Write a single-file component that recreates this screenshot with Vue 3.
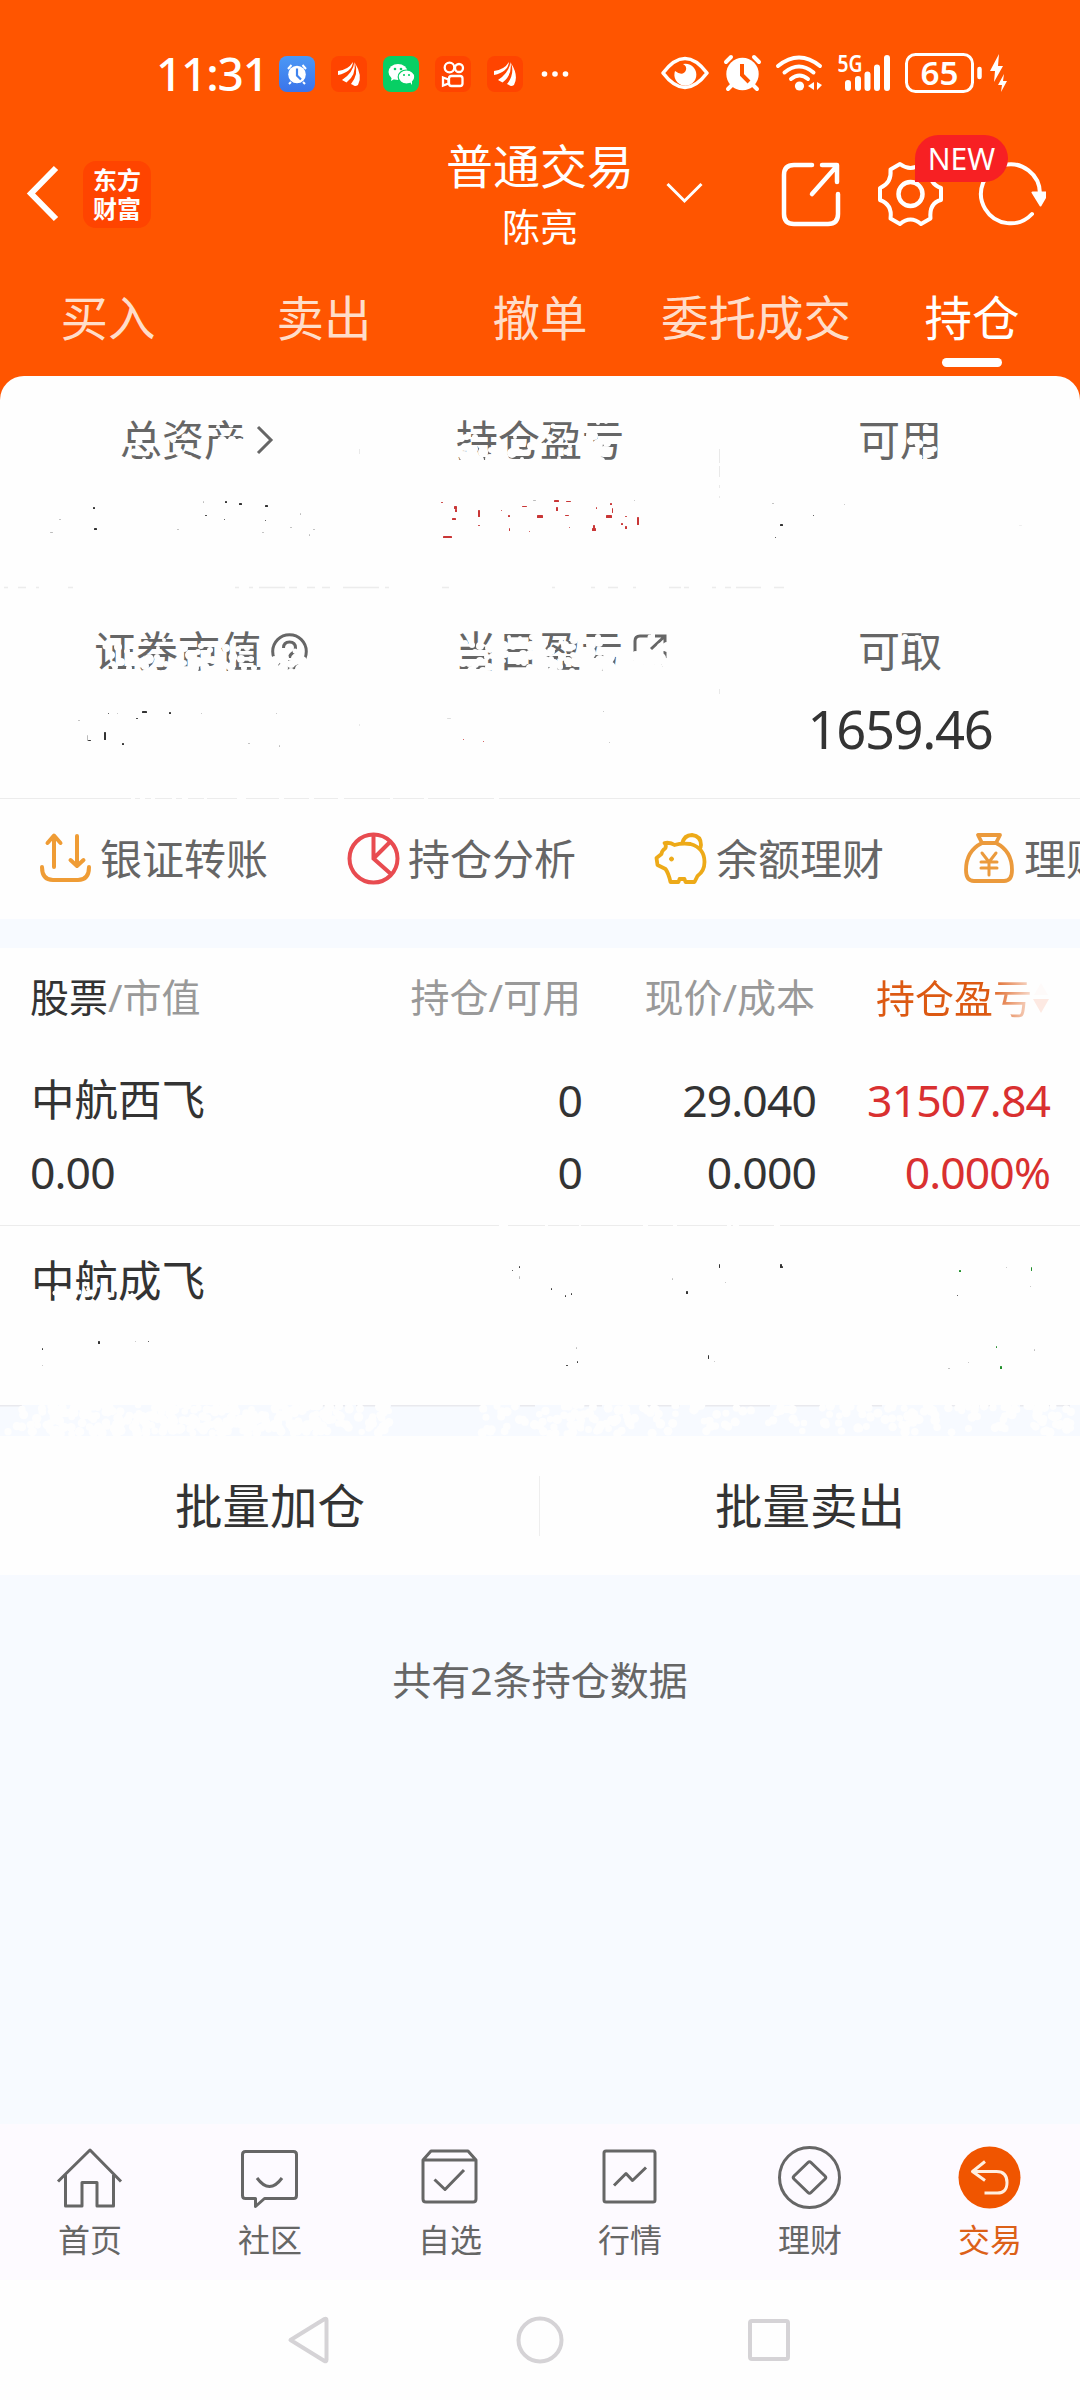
<script setup>
const tabs = ['买入', '卖出', '撤单', '委托成交', '持仓']
const holdings = [
  { name: '中航西飞', value: '0.00', amount: '0', usable: '0', price: '29.040', cost: '0.000', profit: '31507.84', rate: '0.000%' },
  { name: '中航成飞' }
]

// white eraser marks over the hidden figures: [x, y, r]
const blots = [
  [139, 442, 3.5], [134, 452, 3.5], [150, 447, 3.5], [144, 459, 2], [173, 440, 3], [185, 437, 3.5], [179, 452, 4], [196, 451, 3], [190, 457, 2],
  [214, 433, 3.5], [222, 441, 5], [232, 440, 4], [243, 434, 3], [231, 425, 2.5], [240, 441, 3], [218, 427, 2],
  [461, 438, 4], [466, 437, 3], [465, 447, 4], [464, 456, 5], [457, 451, 4], [475, 437, 3], [474, 449, 4], [483, 452, 5], [490, 459, 5], [480, 460, 4], [484, 440, 2], [472, 457, 4], [491, 450, 3],
  [504, 444, 3], [502, 451, 4], [512, 453, 5], [521, 444, 3], [506, 457, 2.5], [531, 446, 4], [515, 437, 2], [520, 452, 3], [522, 459, 2],
  [546, 430, 3.5], [553, 426, 2.5], [549, 437, 3], [561, 440, 2.5], [566, 452, 3], [559, 458, 2], [544, 445, 2.5], [570, 446, 2], [552, 454, 2],
  [594, 436, 4], [590, 445, 5], [598, 444, 5], [607, 443, 4], [596, 452, 6], [604, 450, 4], [593, 459, 6], [601, 461, 4], [598, 423, 2], [606, 422, 2], [590, 435, 4],
  [911, 441, 4], [919, 444, 4.5], [929, 441, 4], [914, 453, 4], [928, 453, 5], [934, 449, 3], [920, 457, 2.5], [926, 427, 3],
  [106, 646, 3.5], [111, 655, 4], [118, 647, 4], [121, 662, 4], [130, 659, 4], [127, 651, 3], [115, 667, 3], [129, 668, 3], [113, 664, 3],
  [146, 643, 3], [149, 659, 5], [157, 657, 3], [145, 666, 4], [166, 664, 3], [176, 665, 4], [164, 640, 2], [153, 668, 3], [158, 648, 2],
  [184, 648, 4], [190, 655, 5], [198, 662, 5], [205, 667, 4.5], [213, 660, 4], [210, 650, 3], [194, 668, 5], [184, 663, 3], [201, 646, 3], [198, 652, 3],
  [226, 648, 4], [233, 657, 4.5], [241, 659, 4], [231, 667, 4.5], [251, 659, 3], [247, 648, 3], [225, 665, 4], [254, 668, 3], [238, 649, 3], [244, 668, 3],
  [275, 661, 5], [283, 668, 5], [291, 664, 4], [302, 661, 5], [300, 669, 5], [286, 658, 3], [295, 651, 2.5], [275, 669, 5], [291, 671, 3],
  [465, 643, 3], [472, 645, 3], [466, 653, 3], [480, 646, 4], [490, 648, 5], [475, 652, 3], [487, 657, 3], [480, 661, 4], [469, 664, 3], [475, 664, 4], [489, 667, 4], [463, 663, 4], [472, 671, 5], [483, 671, 4], [492, 656, 3],
  [504, 646, 5], [505, 654, 4], [513, 645, 5], [523, 643, 5], [531, 646, 5], [514, 659, 4], [523, 654, 4], [530, 655, 5], [501, 638, 1.5], [509, 637, 2], [518, 662, 3], [524, 663, 3], [532, 637, 3], [504, 661, 2], [530, 668, 4], [520, 638, 2],
  [544, 643, 4], [551, 651, 4], [565, 645, 4], [574, 640, 4], [573, 655, 3], [543, 653, 5], [545, 662, 6], [554, 664, 5], [562, 657, 4], [568, 661, 4], [575, 662, 5], [553, 671, 5], [543, 670, 6], [561, 642, 2.5], [572, 671, 3], [551, 659, 3], [560, 667, 3], [573, 647, 3],
  [591, 645, 5], [599, 643, 4], [598, 637, 3], [608, 641, 3], [590, 653, 6], [600, 660, 5], [609, 657, 6], [596, 667, 7], [609, 668, 7], [616, 653, 4], [604, 651, 3],
  [636, 656, 5], [637, 666, 7], [649, 668, 7], [661, 658, 5], [667, 647, 5], [658, 668, 5], [666, 663, 5], [650, 637, 2.5], [661, 647, 4],
  [905, 637, 3], [917, 638, 3],
  [55, 1293, 2.5], [57, 1287, 2], [79, 1292, 2.5], [85, 1284, 2.5], [91, 1293, 3.5], [97, 1285, 3], [109, 1295, 3], [104, 1288, 2], [88, 1289, 2], [132, 1294, 1.5]
]

// what the eraser left of the figures: [x, y, w, h, color]
const K = '#333', G = '#bbb', R = '#c93636', N = '#1f8f2a'
const specks = [
  [93, 507, 2, 2, K], [94, 528, 3, 2, K], [225, 501, 2, 2, K], [239, 503, 3, 2, K], [265, 505, 3, 2, K], [50, 532, 3, 1, G], [59, 519, 2, 1, G],
  [205, 515, 2, 1, K], [177, 529, 2, 1, G], [203, 501, 1, 2, G], [224, 519, 1, 1, K], [265, 520, 1, 1, K], [300, 513, 1, 2, G], [313, 529, 2, 1, G], [262, 532, 2, 1, G], [290, 527, 2, 1, G], [309, 534, 1, 2, G],
  [441, 502, 2, 1, R], [454, 506, 3, 3, R], [455, 509, 2, 3, R], [452, 518, 4, 2, R], [443, 536, 9, 2, R], [478, 510, 2, 7, R], [478, 525, 2, 1, R], [501, 510, 1, 1, R],
  [508, 515, 2, 2, R], [509, 528, 1, 3, R], [522, 506, 5, 1, R], [533, 500, 3, 1, G], [537, 515, 6, 3, R], [529, 531, 1, 1, R], [554, 500, 5, 2, R], [556, 507, 2, 4, R],
  [566, 501, 5, 1, R], [565, 515, 4, 1, R], [569, 527, 1, 1, R], [596, 507, 1, 2, R], [610, 503, 2, 2, R], [612, 508, 1, 5, R], [606, 515, 6, 3, R], [593, 525, 2, 3, R], [592, 528, 4, 3, R],
  [621, 523, 2, 2, R], [625, 516, 2, 1, R], [625, 526, 2, 3, R], [637, 517, 2, 8, R], [634, 500, 1, 1, G],
  [780, 524, 3, 2, K], [813, 515, 1, 1, K], [775, 537, 1, 1, K], [772, 503, 2, 1, G], [844, 504, 1, 1, G], [1019, 525, 3, 1, '#eee'],
  [142, 711, 5, 2, K], [169, 712, 2, 2, K], [136, 718, 2, 1, K], [104, 732, 2, 8, K], [87, 735, 1, 6, G], [88, 740, 3, 1, K], [122, 743, 2, 2, K], [108, 713, 1, 1, K], [78, 720, 2, 1, G],
  [117, 713, 1, 1, G], [248, 743, 2, 1, G], [201, 713, 1, 1, G], [276, 713, 1, 1, G], [279, 745, 1, 2, G], [447, 718, 4, 1, '#ddd'], [463, 739, 1, 1, R], [483, 741, 1, 1, R], [603, 711, 1, 1, G], [609, 742, 1, 1, G],
  [519, 1266, 1, 2, K], [512, 1270, 1, 1, K], [519, 1276, 1, 3, G], [551, 1288, 1, 2, K], [565, 1295, 1, 2, K], [571, 1293, 1, 2, K],
  [719, 1264, 1, 4, K], [780, 1264, 2, 4, K], [782, 1266, 1, 2, K], [686, 1291, 2, 3, K], [672, 1278, 1, 2, G], [725, 1282, 1, 1, G],
  [1031, 1267, 1, 4, N], [959, 1270, 2, 2, N], [957, 1295, 1, 1, K], [1006, 1267, 1, 1, G], [1030, 1286, 1, 1, G],
  [98, 1341, 2, 3, K], [42, 1348, 1, 2, K], [42, 1365, 1, 1, G], [148, 1341, 1, 1, K], [135, 1341, 1, 1, G],
  [576, 1347, 1, 2, G], [577, 1361, 1, 2, K], [566, 1365, 2, 1, K], [708, 1355, 1, 4, K], [714, 1361, 1, 1, G],
  [996, 1346, 1, 2, N], [1000, 1366, 2, 3, N], [968, 1362, 1, 1, G], [1034, 1349, 1, 2, G], [948, 1368, 2, 1, G]
]

// scattered marks on the lower separator band: [from, to, count]
const bandBlots = []
let seed = 7
const rnd = () => (seed = (seed * 16807) % 2147483647) / 2147483647
for (const [from, to, count] of [[8, 50, 12], [50, 330, 290], [325, 390, 40], [480, 650, 75], [650, 870, 62], [870, 1075, 90]]) {
  for (let i = 0; i < count; i++) {
    bandBlots.push([from + rnd() * (to - from), rnd() ** (from > 480 ? 1.4 : 1) * 29, 3.2 + rnd() * 1.6])
  }
}
</script>

<template>
<div class="screen">
  <header class="top">
    <div class="status">
      <span class="time">11:31</span>
      <div class="apps">
        <svg class="app blue" viewBox="0 0 36 36">
          <circle cx="18" cy="18.5" r="8.8" fill="#fff" />
          <path d="M9 13l3.5-4M27 13l-3.5-4M12 26l-2 2M24 26l2 2" stroke="#fff" stroke-width="2" />
          <path d="M18 12.5v7l4 4" stroke="#3f83ee" stroke-width="2.2" fill="none" />
        </svg>
        <svg class="app red" viewBox="0 0 36 36"><path d="M7 15q10-1 15-9q-1 10-15 13zM11 24q11-7 12.500-18q2 13-8 20.500zM20 28q8-10 4-21q8 13 3 22q-3 2-5 0z" fill="#fff" /></svg>
        <svg class="app green" viewBox="0 0 36 36">
          <path d="M9 20l-1 5 5-3z" fill="#fff" /><ellipse cx="15" cy="16" rx="9.5" ry="8" fill="#fff" />
          <ellipse cx="23.5" cy="21" rx="8.3" ry="7" fill="#fff" stroke="#07cf64" stroke-width="1.2" /><path d="M27 26l2 3v-4z" fill="#fff" />
          <g fill="#07cf64"><circle cx="12" cy="13" r="1.3" /><circle cx="18" cy="13" r="1.3" /><circle cx="21" cy="19" r="1.1" /><circle cx="26" cy="19" r="1.1" /></g>
        </svg>
        <svg class="app red" viewBox="0 0 36 36" fill="none" stroke="#fff" stroke-width="2.3">
          <circle cx="14.5" cy="11.5" r="4.8" /><circle cx="24" cy="12" r="4" /><rect x="14" y="20" width="13.5" height="10" rx="2.5" /><path d="M8 21.5l5.5 2v4l-5.5 2z" />
        </svg>
        <svg class="app red" viewBox="0 0 36 36"><path d="M7 15q10-1 15-9q-1 10-15 13zM11 24q11-7 12.500-18q2 13-8 20.500zM20 28q8-10 4-21q8 13 3 22q-3 2-5 0z" fill="#fff" /></svg>
        <svg class="more" width="28" height="8" viewBox="0 0 28 8" fill="#fff"><circle cx="3.5" cy="4" r="2.8" /><circle cx="14" cy="4" r="2.8" /><circle cx="24.5" cy="4" r="2.8" /></svg>
      </div>
      <svg class="sys" width="350" height="64" viewBox="657 42 350 64" fill="none" stroke="#fff">
        <path d="M662 73q22-29 44 0q-22 29-44 0z" stroke-width="3.6" stroke-linejoin="round" />
        <path d="M682 64a11 11 0 1 1-8 7q8 6 11-1q1-4-3-6z" fill="#fff" stroke="none" />
        <circle cx="741.5" cy="74" r="16.2" fill="#fff" stroke="none" />
        <path d="M725 62l5-5M758 62l-5-5M731 85l-4 4M752 85l4 4" stroke-width="4" stroke-linecap="round" />
        <path d="M741 64v11l7 7" stroke="#f50" stroke-width="4" />
        <path d="M777 66q21-17 42 0M783.500 72.500q14.500-12 29 0M790 79q8.500-7 17 0" stroke-width="4" stroke-linecap="round" />
        <circle cx="798.5" cy="86" r="4.6" fill="#fff" stroke="none" />
        <path d="M813 82v8l-6-4zM816 82l5 3-5 5z" fill="#fff" stroke="none" />
        <path d="M847 83v5M857 79v9M866.500 74.500v13.500M876 67.500v20.500M886 58v30" stroke-width="6" stroke-linecap="round" />
        <rect x="905.500" y="54.500" width="66" height="37" rx="9" stroke-width="3" />
        <path d="M978.500 69v8" stroke-width="4.500" stroke-linecap="round" />
        <path d="M998 54l-9 17h5l-1 11 9-16h-5zM1003 74l-6 11h4l-1 7 6-11h-4z" fill="#fff" stroke="none" />
        <text class="five-g" x="836.500" y="72" textLength="25" lengthAdjust="spacingAndGlyphs">5G</text>
        <text class="power" x="919.500" y="85" textLength="38" lengthAdjust="spacingAndGlyphs">65</text>
      </svg>
    </div>

    <div class="bar">
      <div class="bar-left">
        <svg width="36" height="60" viewBox="25 165 36 60" fill="none" stroke="#fff" stroke-width="6"><path d="M56 169L31 194.500l25 25.500" /></svg>
        <div class="brand"><span>东方</span><span>财富</span></div>
      </div>
      <div class="title">
        <div class="title-main">普通交易</div>
        <div class="title-sub">陈亮</div>
      </div>
      <svg class="caret" width="40" height="24" viewBox="664 182 40 24" fill="none" stroke="#fff" stroke-width="3"><path d="M666.500 184l17 17 17-17" /></svg>
      <div class="tools">
        <svg width="270" height="72" viewBox="774 158 270 72" fill="none" stroke="#fff" stroke-width="4.500" stroke-linecap="round" stroke-linejoin="round">
          <path d="M810 165h-18q-10 0-10 10v39q0 10 10 10h34q10 0 10-10v-20M820 165h15v17M834 167l-24 27" />
          <path stroke-width="4" d="M898 164q10.500 8 21 0l9.500 5.500q-2 14 10.500 18.500v12q-12 3-10.500 18.500l-9.500 5.500q-10.500-9-21 0l-9.500-5.500q2-14-10.500-18.500v-12q12-5 10.500-18.500z" />
          <circle cx="908.500" cy="194" r="12" />
          <path stroke-width="4" d="M1030 214a29.500 29.500 0 1 1 8-20" />
          <path d="M1030.500 192.500h15.500l-7.500 13z" fill="#fff" stroke-width="2" />
        </svg>
        <span class="new">NEW</span>
      </div>
    </div>

    <nav class="tabs">
      <div v-for="(t, i) in tabs" :key="t" class="tab" :class="{ active: i === 4 }">{{ t }}</div>
    </nav>
  </header>

  <main class="content">
    <section class="assets">
      <div class="cell"><div class="label total">总资产<svg width="18" height="32" viewBox="0 0 18 32" fill="none" stroke="#666" stroke-width="3"><path d="M2 3l13 13L2 29" /></svg></div></div>
      <div class="cell"><div class="label">持仓盈亏</div></div>
      <div class="cell"><div class="label">可用</div></div>
      <div class="cell"><div class="label worth">证券市值<svg width="37" height="37" viewBox="0 0 37 37" fill="none" stroke="#666" stroke-width="3"><circle cx="18.500" cy="18.500" r="16.800" /><path d="M12.500 15q0-6 6-6t6 6q0 3-3 5-3 2-3 5M18.500 27v3" /></svg></div></div>
      <div class="cell"><div class="label today">当日盈亏<svg width="36" height="36" viewBox="0 0 36 36" fill="none" stroke="#666" stroke-width="3"><path d="M19 3H8Q3 3 3 8v20q0 5 5 5h20q5 0 5-5V18M23 3h10v10M33 3L19 16" /></svg></div></div>
      <div class="cell"><div class="label">可取</div><div class="figure">1659.46</div></div>
    </section>

    <section class="menu">
      <div class="menu-item">
        <svg width="54" height="54" viewBox="38 831 54 54" fill="none" stroke="#ef9c35" stroke-width="4" stroke-linecap="round" stroke-linejoin="round">
          <path d="M42 867q0 13 11 13h25q11 0 11-13M54 867v-31M47.500 843l6.500-7.500 6.500 7.500M77 836v29M70.500 860l6.500 6 6.500-6" />
        </svg>
        <span>银证转账</span>
      </div>
      <div class="menu-item">
        <svg width="54" height="54" viewBox="346 831 54 54" fill="none" stroke="#e84b50" stroke-width="4"><circle cx="373.500" cy="858.500" r="24" /><path d="M373.500 834v24.500l18 16M373.500 858.500l17-17" /></svg>
        <span>持仓分析</span>
      </div>
      <div class="menu-item">
        <svg width="54" height="54" viewBox="654 831 54 54" fill="none" stroke="#edaa18" stroke-width="3.800" stroke-linejoin="round">
          <path d="M682 844q2-9 10-9 9 1 9 10 0 3-2 5" />
          <path d="M664.500 843q6-1 10 2 7-2 16-1 14 4 14 18 0 9-7 14l-3 6h-9l-1-3h-5l-1 3h-8q-2-9-5-13l-8-4-1-7 5-4q0-3 4-6 1-3-1-5z" />
          <circle cx="671.500" cy="859" r="2" fill="#edaa18" stroke-width="1" />
        </svg>
        <span>余额理财</span>
      </div>
      <div class="menu-item">
        <svg width="54" height="54" viewBox="962 831 54 54" fill="none" stroke="#eb9a3c" stroke-width="3.800" stroke-linecap="round" stroke-linejoin="round">
          <path d="M978 835h22l-4 8q16 8 16 27 0 11-8 11h-30q-8 0-8-11 0-19 16-27zM982 843h14" /><path d="M982 853l7 9 7-9M989 862v13M981 862h16M981 868h16" stroke-width="3" />
        </svg>
        <span>理财</span>
      </div>
    </section>
    <div class="gap"></div>

    <section class="table">
      <div class="head row">
        <span><b>股票</b>/市值</span><span>持仓/可用</span><span>现价/成本</span>
        <span class="sorted"><i>持仓盈亏</i><svg width="18" height="34" viewBox="0 0 18 34"><path d="M9 3l7 12H2z" fill="#fefaf9" /><path d="M1 19h16L9 33z" fill="#fde9e2" /></svg></span>
      </div>
      <div v-for="h in holdings" :key="h.name" class="holding">
        <div class="row"><span class="name">{{ h.name }}</span><span>{{ h.amount }}</span><span>{{ h.price }}</span><span class="up">{{ h.profit }}</span></div>
        <div class="row second"><span>{{ h.value }}</span><span>{{ h.usable }}</span><span>{{ h.cost }}</span><span class="up">{{ h.rate }}</span></div>
      </div>
    </section>

    <svg class="band" width="1080" height="31" viewBox="0 0 1080 31">
      <path d="M0 .8H22M310 .8h35M356 .8h20M391 .8h90M520 .8h15M580 .8h22M640 .8h40M700 .8h70M790 .8h30M860 .8h22M950 .8h40M1020 .8h50" stroke="#e9e9ee" stroke-width="1.500" />
      <ellipse v-for="(b, i) in bandBlots" :key="i" :cx="b[0]" :cy="b[1]" :rx="b[2]" :ry="b[2]" fill="#fefefe" />
    </svg>

    <section class="batch"><div>批量加仓</div><div>批量卖出</div></section>
    <p class="count">共有2条持仓数据</p>

    <svg class="erased" width="1080" height="1024" viewBox="0 376 1080 1024">
      <path d="M4 587.500h4M18 587.500h8M36 587.500h3M68 587.500h5M235 587.500h4M249 587.500h4M259 587.500h26M289 587.500h8M307 587.500h8M322 587.500h8M343 587.500h36M385 587.500h4M442 587.500h7M552 587.500h3M591 587.500h4M608 587.500h10M633 587.500h3M669 587.500h12M684 587.500h5M712 587.500h4M725 587.500h6M736 587.500h25M774 587.500h10" stroke="#ececec" stroke-width="1.500" />
      <path d="M359.500 449v5M719.500 449v14M719.500 466v11M719.500 485v3M719.500 496v2M719.500 689v5M359.500 724v2" stroke="#e9e9e9" stroke-width="1" />
      <circle v-for="(b, i) in blots" :key="'b' + i" :cx="b[0]" :cy="b[1]" :r="b[2]" fill="#fefefe" />
      <path d="M131 798.500h4M140 798.500h5M151 798.500h4M172 798.500h4M182 798.500h6M204 798.500h3M237 798.500h9M279 798.500h5M309 798.500h5M338 798.500h6M390 798.500h3M424 798.500h4M494 798.500h5M499 1225.500h9M545 1225.500h3M579 1225.500h2M643 1225.500h5M673 1225.500h4M727 1225.500h4M733 1225.500h6M774 1225.500h6" stroke="#fefefe" stroke-width="4" />
      <rect v-for="(s, i) in specks" :key="'s' + i" :x="s[0]" :y="s[1]" :width="s[2]" :height="s[3]" :fill="s[4]" rx=".6" />
    </svg>
  </main>

  <footer class="dock">
    <div class="dock-item">
      <svg width="70" height="70" viewBox="55 2142 70 70"><path d="M58 2181.500l32-31.500 31 31.500M65.500 2175v31h16.500v-23.500h15v23.500h16.500v-31" /></svg>首页
    </div>
    <div class="dock-item">
      <svg width="70" height="70" viewBox="235 2142 70 70"><path d="M245.500 2151.500h48q3 0 3 3v41q0 3-3 3h-29l-9 8v-8h-10q-3 0-3-3v-41q0-3 3-3zM257 2178q12.500 17 25 0" /></svg>社区
    </div>
    <div class="dock-item">
      <svg width="70" height="70" viewBox="415 2142 70 70"><path d="M423 2160l8-9h37l8 9v39q0 3-3 3h-47q-3 0-3-3zh53M434.500 2179.500l10.500 10 19-19.500" /></svg>自选
    </div>
    <div class="dock-item">
      <svg width="70" height="70" viewBox="595 2142 70 70"><rect x="604" y="2151" width="51" height="51" rx="2" /><path d="M614 2185.500l12-12 6.500 7 13.500-13" /></svg>行情
    </div>
    <div class="dock-item">
      <svg width="70" height="70" viewBox="775 2142 70 70"><circle cx="809.500" cy="2177.500" r="30" /><path d="M808 2162.500q1.500-1.500 3 0l14 13.500q1.500 1.500 0 3l-14 13.500q-1.500 1.500-3 0l-14-13.500q-1.500-1.500 0-3z" /></svg>理财
    </div>
    <div class="dock-item current">
      <svg width="70" height="70" viewBox="955 2142 70 70"><circle cx="989.500" cy="2177.500" r="31" fill="#f05500" stroke="none" /><path d="M985 2161.500l-12.500 10 12.500 9M973 2171.500h23.500q10.500 0 10.500 11t-10.500 10.500h-12" stroke="#ffefe0" /></svg>交易
    </div>
  </footer>

  <div class="keys">
    <svg width="520" height="60" viewBox="280 2310 520 60" fill="none" stroke="#d5d3d6" stroke-width="4" stroke-linejoin="round">
      <path d="M290.500 2340l34-21q2-1 2 1.500v39q0 2.500-2 1.500z" /><circle cx="540" cy="2340" r="21.500" /><rect x="750" y="2321" width="38" height="38" rx="2" />
    </svg>
  </div>
</div>
</template>

<style>
body {
    margin: 0;
}
</style>

<style scoped>
.screen {
    display: flex;
    flex-direction: column;
    width: 1080px;
    height: 2400px;
    overflow: hidden;
    background: #f7faff;
    color: #333;
    font-family: "Noto Sans", "Noto Sans CJK SC", sans-serif;
}
svg {
    flex: none;
}

.top {
    height: 400px;
    background: #ff5500;
    color: #fff;
}
.status {
    display: flex;
    align-items: center;
    height: 106px;
    padding: 42px 72px 0 156px;
    box-sizing: border-box;
}
.time {
    width: 123px;
    font-size: 46px;
    font-weight: 500;
    line-height: 62px;
    letter-spacing: -1.2px;
    position: relative;
    top: -1px;
}
.apps {
    display: flex;
    align-items: center;
    gap: 16px;
}
.app {
    width: 36px;
    height: 36px;
    border-radius: 8px;
}
.app.blue {
    background: linear-gradient(#4b98f5, #3b74ea);
}
.app.red {
    background: #ff4400;
}
.app.green {
    background: #07cf64;
}
.more {
    margin-left: 2px;
}
.sys {
    margin-left: auto;
}
.five-g {
    fill: #fff;
    stroke: none;
    font-size: 23px;
    font-weight: 600;
}
.power {
    fill: #fff;
    stroke: none;
    font-size: 33px;
    font-weight: 600;
}

.bar {
    display: grid;
    grid-template-columns: 420px 240px 1fr 304px;
    align-items: center;
    height: 176px;
}
.bar-left {
    display: flex;
    align-items: center;
    gap: 22px;
    padding-left: 25px;
}
.brand {
    display: flex;
    flex-direction: column;
    align-items: center;
    justify-content: center;
    width: 68px;
    height: 67px;
    border-radius: 13px;
    background: #ff4400;
    font-size: 24px;
    font-weight: 700;
    line-height: 29px;
}
.title {
    text-align: center;
}
.title-main {
    font-size: 47px;
    line-height: 62px;
}
.title-sub {
    font-size: 38px;
    line-height: 58px;
}
.title-main, .title-sub {
    position: relative;
    top: 1px;
    white-space: nowrap;
}
.caret {
    margin-left: 5px;
}
.tools {
    position: relative;
    height: 72px;
}
.new {
    position: absolute;
    left: 139px;
    top: -23px;
    width: 93px;
    height: 47px;
    border-radius: 24px 24px 24px 0;
    background: #f72023;
    font-size: 30px;
    line-height: 47px;
    text-align: center;
}

.tabs {
    display: grid;
    grid-template-columns: repeat(5, 216px);
    height: 94px;
}
.tab {
    display: flex;
    flex-direction: column;
    align-items: center;
    padding-top: 1px;
    font-size: 47.5px;
    line-height: 70px;
    color: #ffddc9;
}
.tab.active {
    color: #fff;
}
.tab.active::after {
    content: "";
    width: 60px;
    height: 9px;
    margin-top: 5px;
    border-radius: 5px;
    background: #fff;
}

.content {
    position: relative;
    height: 1748px;
    margin-top: -24px;
}
.assets {
    display: grid;
    grid-template: repeat(2, 211px) / repeat(3, 360px);
    border-radius: 24px 24px 0 0;
    border-bottom: 1px solid #ececec;
    background: #fefefe;
    text-align: center;
}
.label {
    display: flex;
    align-items: center;
    justify-content: center;
    padding-top: 34px;
    font-size: 42px;
    line-height: 60px;
    color: #666;
}
.total {
    gap: 10px;
    padding-left: 34px;
}
.worth {
    gap: 9px;
    padding-left: 42px;
}
.today {
    gap: 9px;
    padding-left: 43px;
}
.figure {
    padding-top: 15px;
    font-size: 52.500px;
    line-height: 66px;
    letter-spacing: -1.300px;
}

.menu {
    display: flex;
    height: 120px;
    padding-left: 38px;
    background: #fefefe;
    overflow: hidden;
}
.menu-item {
    display: flex;
    flex: 0 0 308px;
    align-items: center;
    gap: 8px;
    font-size: 42px;
    color: #666;
}
.menu svg {
    position: relative;
    top: -1px;
}
.menu span {
    position: relative;
    top: -3px;
    white-space: nowrap;
}
.gap {
    height: 29px;
}

.table {
    background: #fefefe;
}
.row {
    display: grid;
    grid-template-columns: 250px 301px 234px 234px;
    padding: 0 30px 0 31px;
    white-space: nowrap;
}
.row > :not(:first-child) {
    text-align: right;
}
.head {
    height: 115px;
    padding-left: 30px;
    grid-template-columns: 251px 300px 234px 235px;
    font-size: 39px;
    line-height: 97px;
    color: #999;
}
.head b {
    font-weight: 400;
    color: #333;
}
.sorted {
    display: flex;
    align-items: center;
    justify-content: flex-end;
    height: 98px;
}
.sorted i {
    font-style: normal;
    background: linear-gradient(90deg, #dc5912 0 72%, #f8ddd0 100%);
    background-clip: text;
    color: transparent;
}
.holding {
    height: 162px;
    box-sizing: border-box;
    font-size: 44.500px;
}
.holding + .holding {
    height: 180px;
    border-top: 1px solid #ececec;
}
.holding .row {
    height: 72px;
    line-height: 73px;
    letter-spacing: -.9px;
}
.holding .name {
    font-size: 43.500px;
    letter-spacing: 0;
}
.holding + .holding .row {
    padding-top: 18px;
}
.second {
    padding-left: 30px;
    grid-template-columns: 251px 301px 234px 234px;
}
.up {
    color: #d93030;
}
.band {
    display: block;
}

.batch {
    display: grid;
    grid-template-columns: 1fr 1fr;
    align-items: center;
    height: 139px;
    background: #fefefe;
    font-size: 47.500px;
    line-height: 60px;
    text-align: center;
}
.batch div + div {
    border-left: 1px solid #eee;
    margin-left: -1px;
}
.count {
    margin: 75px 0 0;
    font-size: 39px;
    line-height: 60px;
    color: #666;
    text-align: center;
}
.erased {
    position: absolute;
    left: 0;
    top: 0;
}

.dock {
    display: grid;
    grid-template-columns: repeat(6, 180px);
    height: 156px;
    background: #fdfaff;
}
.dock-item {
    display: flex;
    flex-direction: column;
    align-items: center;
    padding-top: 18px;
    font-size: 32px;
    line-height: 56px;
    color: #666;
}
.dock-item svg {
    fill: none;
    stroke: #666;
    stroke-width: 3;
    stroke-linejoin: round;
}
.dock-item.current {
    color: #dc6018;
}
.keys {
    display: flex;
    flex: 1;
    align-items: center;
    justify-content: center;
    background: #fefefe;
}
</style>
